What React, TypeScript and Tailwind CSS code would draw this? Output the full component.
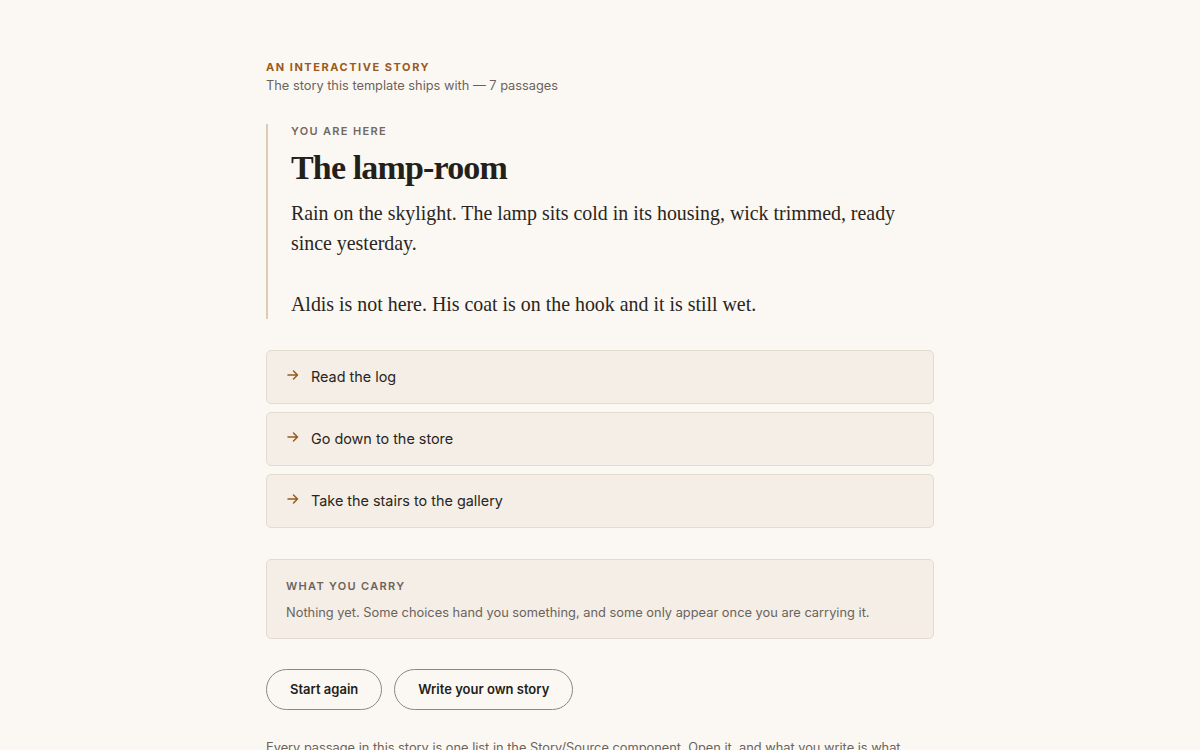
const sans = "font-['Inter','Helvetica_Neue',Arial,sans-serif]";
const serif = "font-['Liberation_Serif','Times_New_Roman',serif]";

const choices = ["Read the log", "Go down to the store", "Take the stairs to the gallery"];

function Arrow() {
  return (
    <svg width="12" height="12" viewBox="0 0 12 12" fill="none" className="mt-[-4px] shrink-0">
      <path d="M1 6h9.5M6.5 2 10.5 6l-4 4" stroke="#9a5a1e" strokeWidth="1.5" strokeLinecap="round" strokeLinejoin="round" />
    </svg>
  );
}

export default function App() {
  return (
    <div className={`min-h-[750px] w-full bg-[#fbf8f3] ${sans} text-[#2a2520]`}>
      <main className="mx-auto w-[668px] pt-[60px]">
        <header>
          <p className="text-[11px] font-bold uppercase leading-[14px] tracking-[0.14em] text-[#9a5a1e]">
            An interactive story
          </p>
          <p className="mt-[3px] text-[12.8px] leading-[18px] text-[#6b635b]">
            The story this template ships with — 7 passages
          </p>
        </header>

        <section className="mt-[29px] border-l-2 border-[#dccbb7] pl-[23px]">
          <p className="text-[11px] font-semibold uppercase leading-[14px] tracking-[0.12em] text-[#716860]">
            You are here
          </p>
          <h1 className={`${serif} mt-[8px] text-[34px] font-bold leading-[44px] tracking-[-0.025em] text-[#231f1b]`}>
            The lamp-room
          </h1>
          <div className={`${serif} mt-[8px] text-[19.9px] leading-[30px] text-[#2a2520]`}>
            <p className="mb-[31px]">
              Rain on the skylight. The lamp sits cold in its housing, wick trimmed, ready since yesterday.
            </p>
            <p>Aldis is not here. His coat is on the hook and it is still wet.</p>
          </div>
        </section>

        <ul className="mt-[31px] flex flex-col gap-[8px]">
          {choices.map((c) => (
            <li key={c}>
              <button className="flex h-[54px] w-full items-center gap-[12px] rounded-[5px] border border-[#e3dbd0] bg-[#f4eee6] px-[20px] text-left text-[14.4px] text-[#2a2520]">
                <Arrow />
                <span>{c}</span>
              </button>
            </li>
          ))}
        </ul>

        <div className="mt-[31px] rounded-[5px] border border-[#e3dbd0] bg-[#f4eee6] px-[19px] pb-[16px] pt-[19px]">
          <p className="text-[11px] font-semibold uppercase leading-[14px] tracking-[0.12em] text-[#6b635b]">
            What you carry
          </p>
          <p className="mt-[11px] text-[12.85px] leading-[18px] text-[#6b635b]">
            Nothing yet. Some choices hand you something, and some only appear once you are carrying it.
          </p>
        </div>

        <div className="mt-[30px] flex gap-[12px]">
          <button className="h-[41px] rounded-full border border-[#8f867c] px-[23px] text-[13px] font-semibold text-[#231f1b]">
            Start again
          </button>
          <button className="h-[41px] rounded-full border border-[#8f867c] px-[23px] text-[13px] font-semibold text-[#231f1b]">
            Write your own story
          </button>
        </div>

        <p className="mt-[28px] max-w-[650px] text-[12.8px] leading-[20px] text-[#6b635b]">
          Every passage in this story is one list in the Story/Source component. Open it, and what you write is what
          the reader walks through.
        </p>
      </main>
    </div>
  );
}
